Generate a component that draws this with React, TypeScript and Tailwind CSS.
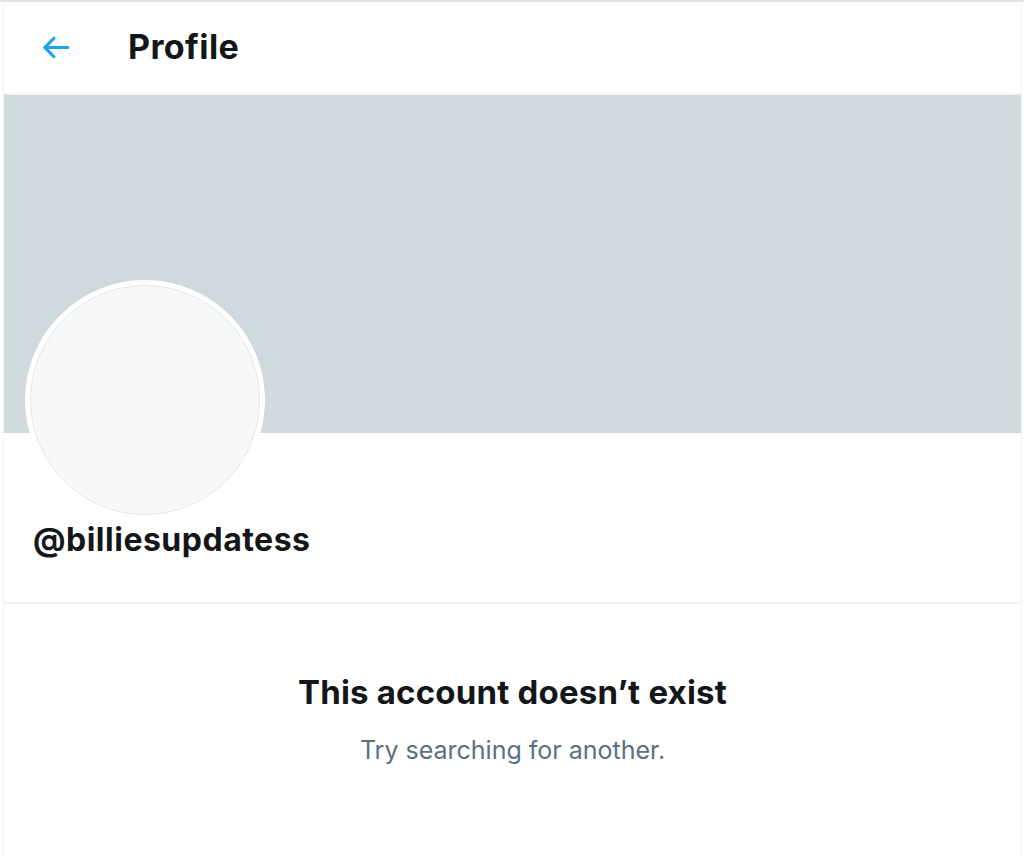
import React from 'react';

const BackArrow: React.FC = () => (
  <svg viewBox="0 0 24 24" className="w-[37px] h-[37px] fill-[#1da1f2]">
    <path d="M20 11H7.414l4.293-4.293c.39-.39.39-1.023 0-1.414s-1.023-.39-1.414 0l-6 6c-.39.39-.39 1.023 0 1.414l6 6c.195.195.45.293.707.293s.512-.098.707-.293c.39-.39.39-1.023 0-1.414L7.414 13H20c.553 0 1-.447 1-1s-.447-1-1-1z" />
  </svg>
);

const App: React.FC = () => {
  return (
    <div className="min-h-screen bg-white pt-[2px] border-t-2 border-[#e2e2e6] font-['Inter',sans-serif] text-[#14171a]">
      <div className="ml-[3px] w-[1019px] min-h-[852px] border-x border-[#eff3f4]">
        <header className="h-[91px] pb-[4px] flex items-center border-b-2 border-[#eff3f4]">
          <div className="w-[124px] pl-[33px] pt-[1px] flex items-center">
            <BackArrow />
          </div>
          <h1 className="text-[34px] font-bold tracking-[0.4px]">Profile</h1>
        </header>

        <div className="h-[338px] bg-[#cfd9de]" />

        <div className="relative h-[171px] border-b-2 border-[#eff3f4]">
          <div className="absolute left-[21px] -top-[153px] w-[240px] h-[240px] rounded-full bg-white p-[5px]">
            <div className="w-full h-full rounded-full bg-[#f7f9f9] border border-[#e4e8ea]" />
          </div>
          <div className="pt-[87px] pl-[29px] text-[32px] leading-[40px] font-bold tracking-[0.5px]">@billiesupdatess</div>
        </div>

        <div className="flex flex-col items-center pt-[68px]">
          <h2 className="text-[33px] font-bold leading-[40px] tracking-[0.2px]">This account doesn’t exist</h2>
          <p className="mt-[23px] text-[25px] leading-[30px] text-[#5b7083]">Try searching for another.</p>
        </div>
      </div>
    </div>
  );
};

export default App;
